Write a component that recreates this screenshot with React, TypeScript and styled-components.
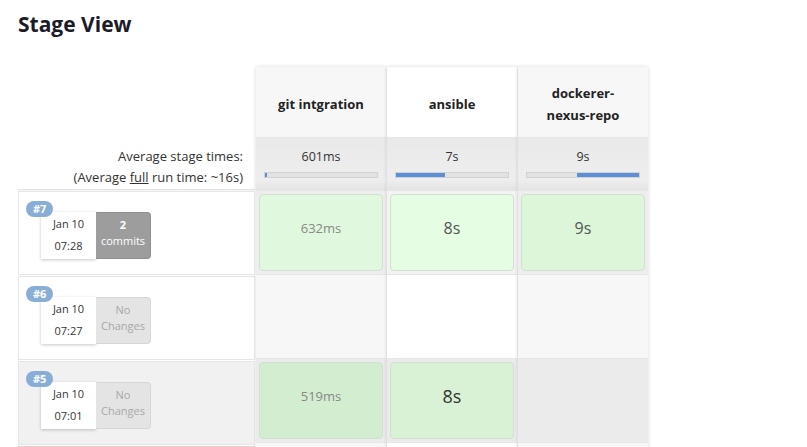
import React from "react";
import styled, { createGlobalStyle } from "styled-components";

const GlobalStyle = createGlobalStyle`
  body {
    margin: 0;
    background: #fff;
    font-family: "Open Sans", "Noto Sans", sans-serif;
    color: #333;
  }
`;

const Page = styled.div`
  padding: 12px 0 0 18px;
  height: 447px;
  overflow: hidden;
  box-sizing: border-box;
`;

const Title = styled.h2`
  margin: 0 0 31px 0;
  font-size: 21px;
  line-height: 24px;
  font-weight: 700;
  color: #1c1c28;
`;

const Table = styled.div`
  display: flex;
  align-items: flex-start;
`;

const LeftCol = styled.div`
  width: 237px;
  display: flex;
  flex-direction: column;
`;

const HeadSpacer = styled.div`
  height: 71px;
`;

const AvgLabel = styled.div`
  height: 52px;
  box-sizing: border-box;
  padding: 8px 12px 0 0;
  text-align: right;
  font-size: 13px;
  line-height: 21px;
  color: #333;
  border-bottom: 1px solid #e2e2e2;
  box-shadow: 0 2px 2px -1px rgba(0, 0, 0, 0.06);

  u {
    text-decoration: underline;
  }
`;

const RunRow = styled.div<{ $shade?: boolean; $failed?: boolean }>`
  height: 84px;
  box-sizing: border-box;
  border: 1px solid ${(p) => (p.$failed ? "#f3c9c9" : "#e6e6e6")};
  background: ${(p) => (p.$failed ? "#fdf0f0" : p.$shade ? "#f1f1f1" : "#fff")};
  position: relative;
  padding: 20px 0 0 22px;
  margin-top: 1px;
`;

const Badge = styled.span`
  position: absolute;
  left: 7px;
  top: 9px;
  padding: 0 7px;
  height: 16px;
  line-height: 16px;
  border-radius: 8px;
  background: #88aed8;
  color: #fff;
  font-size: 11px;
  font-weight: 700;
`;

const RunInfo = styled.div`
  display: flex;
  height: 47px;
`;

const DateBox = styled.div`
  width: 55px;
  background: #fff;
  box-shadow: 0 1px 3px rgba(0, 0, 0, 0.22);
  font-size: 11px;
  line-height: 22px;
  text-align: center;
  color: #333;
  padding-top: 1px;
  box-sizing: border-box;
`;

const ChangeBox = styled.div<{ $commits?: boolean }>`
  width: 55px;
  border-radius: 0 4px 4px 0;
  background: ${(p) => (p.$commits ? "#9d9d9d" : "#e4e4e4")};
  color: ${(p) => (p.$commits ? "#fff" : "#a8a8a8")};
  border: 1px solid ${(p) => (p.$commits ? "#8f8f8f" : "#d6d6d6")};
  border-left: none;
  box-sizing: border-box;
  font-size: 11px;
  line-height: 16px;
  text-align: center;
  padding-top: 4px;

  b {
    font-weight: 700;
  }
`;

const StageCol = styled.div<{ $light?: boolean }>`
  width: 130px;
  margin-left: 1px;
  display: flex;
  flex-direction: column;
  box-shadow: 0 0 4px rgba(0, 0, 0, 0.16);
  background: ${(p) => (p.$light ? "#fff" : "#f7f7f7")};
`;

const StageHead = styled.div`
  height: 71px;
  display: flex;
  align-items: center;
  justify-content: center;
  text-align: center;
  padding: 4px 18px 0 18px;
  font-size: 13px;
  font-weight: 700;
  line-height: 22px;
  color: #222;
  border-bottom: 1px solid #e6e6e6;
  box-sizing: border-box;
`;

const AvgCell = styled.div`
  height: 52px;
  box-sizing: border-box;
  background: linear-gradient(#e9e9e9, #eeeeee 80%, #e4e4e4);
  padding: 10px 8px 0 8px;
  text-align: center;
  font-size: 12.5px;
  line-height: 18px;
  color: #333;
`;

const Bar = styled.div`
  margin-top: 6px;
  height: 4px;
  background: #e2e2e2;
  border: 1px solid #d2d2d2;
  display: flex;
`;

const BarFill = styled.div`
  background: #5d8fd8;
  height: 100%;
`;

const CellWrap = styled.div<{ $bg: string }>`
  height: 84px;
  box-sizing: border-box;
  padding: 3px;
  background: ${(p) => p.$bg};
  border-top: 1px solid #e6e6e6;
`;

const TimeCell = styled.div<{ $bg: string; $size: number; $color: string }>`
  height: 100%;
  box-sizing: border-box;
  border: 1px solid #d3dfd2;
  border-radius: 4px;
  background: ${(p) => p.$bg};
  display: flex;
  align-items: center;
  justify-content: center;
  font-size: ${(p) => p.$size}px;
  color: ${(p) => p.$color};
  padding-bottom: 10px;
`;

type Cell = { t: string; bg: string; size: number; color: string } | null;

type Stage = {
  name: React.ReactNode;
  avg: string;
  barStart: number;
  barWidth: number;
  light?: boolean;
  rowBgs: string[];
  cells: Cell[];
};

const stages: Stage[] = [
  {
    name: "git intgration",
    avg: "601ms",
    barStart: 0,
    barWidth: 2,
    rowBgs: ["#eeeeee", "#f7f7f7", "#ebebeb", "#f7f7f7"],
    cells: [
      { t: "632ms", bg: "#e0f8dd", size: 13, color: "#888" },
      null,
      { t: "519ms", bg: "#d3edd0", size: 13, color: "#888" },
      null,
    ],
  },
  {
    name: "ansible",
    avg: "7s",
    barStart: 0,
    barWidth: 44,
    light: true,
    rowBgs: ["#f3f3f3", "#fff", "#ebebeb", "#fff"],
    cells: [
      { t: "8s", bg: "#e5fde3", size: 16, color: "#555" },
      null,
      { t: "8s", bg: "#d9f2d6", size: 18, color: "#333" },
      null,
    ],
  },
  {
    name: (
      <>
        dockerer-
        <br />
        nexus-repo
      </>
    ),
    avg: "9s",
    barStart: 45,
    barWidth: 55,
    rowBgs: ["#eeeeee", "#f7f7f7", "#ebebeb", "#f7f7f7"],
    cells: [
      { t: "9s", bg: "#ddf6da", size: 16, color: "#555" },
      null,
      null,
      null,
    ],
  },
];

const runs = [
  { id: "#7", date: "Jan 10", time: "07:28", commits: 2 },
  { id: "#6", date: "Jan 10", time: "07:27", commits: 0 },
  { id: "#5", date: "Jan 10", time: "07:01", commits: 0 },
];

export default function App() {
  return (
    <Page>
      <GlobalStyle />
      <Title>Stage View</Title>
      <Table>
        <LeftCol>
          <HeadSpacer />
          <AvgLabel>
            Average stage times:
            <br />
            (Average <u>full</u> run time: ~16s)
          </AvgLabel>
          {runs.map((r, i) => (
            <RunRow key={r.id} $shade={i === 2}>
              <Badge>{r.id}</Badge>
              <RunInfo>
                <DateBox>
                  {r.date}
                  <br />
                  {r.time}
                </DateBox>
                {r.commits > 0 ? (
                  <ChangeBox $commits>
                    <b>{r.commits}</b>
                    <br />
                    commits
                  </ChangeBox>
                ) : (
                  <ChangeBox>
                    No
                    <br />
                    Changes
                  </ChangeBox>
                )}
              </RunInfo>
            </RunRow>
          ))}
          <RunRow $failed />
        </LeftCol>
        {stages.map((s, si) => (
          <StageCol key={si} $light={s.light}>
            <StageHead>{s.name}</StageHead>
            <AvgCell>
              {s.avg}
              <Bar>
                <div style={{ width: `${s.barStart}%` }} />
                <BarFill style={{ width: `${s.barWidth}%` }} />
              </Bar>
            </AvgCell>
            {s.cells.map((c, ci) => (
              <CellWrap key={ci} $bg={s.rowBgs[ci]}>
                {c && (
                  <TimeCell $bg={c.bg} $size={c.size} $color={c.color}>
                    {c.t}
                  </TimeCell>
                )}
              </CellWrap>
            ))}
          </StageCol>
        ))}
      </Table>
    </Page>
  );
}
